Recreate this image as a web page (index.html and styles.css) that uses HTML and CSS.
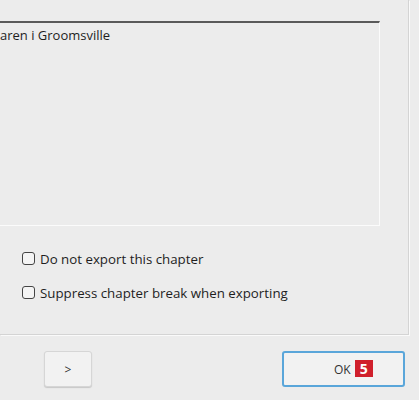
FILE: index.html
```html
<!DOCTYPE html>
<html lang="en">
<head>
  <meta charset="UTF-8">
  <title>Chapter</title>
  <link rel="stylesheet" href="styles.css">
</head>
<body>

  <div class="panel">
    <div class="textbox">aren i Groomsville</div>

    <div class="options">
      <label class="check"><span class="box"></span>Do not export this chapter</label>
      <label class="check"><span class="box"></span>Suppress chapter break when exporting</label>
    </div>
  </div>

  <div class="buttons">
    <button class="btn more">&gt;</button>
    <button class="btn ok">OK <span class="badge">5</span></button>
  </div>

</body>
</html>
```

FILE: styles.css
```css
body {
  background: #ececec;
  color: #1e1e1e;
  font-family: "Open Sans", "Noto Sans", sans-serif;
  font-size: 13px;
  margin: 0;
  width: 419px;
  height: 400px;
  overflow: hidden;
}
.panel {
  width: 409px;
  height: 335px;
  box-sizing: border-box;
  padding-top: 21px;
  border-right: 1px solid #d4d4d4;
  border-bottom: 1px solid #d4d4d4;
  box-shadow: 1px 1px 0 #fafafa;
}
.textbox {
  width: 380px;
  height: 205px;
  box-sizing: border-box;
  border-top: 2px solid #5a5a5a;
  border-right: 1px solid #fbfbfb;
  border-bottom: 1px solid #fbfbfb;
  padding: 4px 0 0 0;
  line-height: 17px;
}
.options {
  display: flex;
  flex-direction: column;
  gap: 17px;
  padding: 24px 0 0 22px;
  font-size: 13.3px;
}
.check {
  display: flex;
  align-items: center;
  gap: 5px;
  height: 17px;
}
.box {
  width: 11px;
  height: 11px;
  border: 1px solid #444;
  border-radius: 3px;
  background: #f4f4f4;
}
.buttons {
  display: flex;
  justify-content: space-between;
  padding: 16px 14px 0 44px;
}
.btn {
  height: 36px;
  border-radius: 3px;
  font-family: inherit;
  font-size: 12px;
  color: #333;
  background: #f2f2f2;
  cursor: pointer;
}
.more {
  width: 48px;
  border: 1px solid #d6d6d6;
  box-shadow: 0 1px 1px #c8c8c8;
}
.ok {
  width: 123px;
  border: 2px solid #5aa6da;
  padding-left: 50px;
  text-align: left;
}
.badge {
  display: inline-block;
  background: #d0202c;
  color: white;
  font-weight: bold;
  font-size: 14px;
  width: 18px;
  height: 17px;
  line-height: 17px;
  text-align: center;
  margin-left: 1px;
}
```
